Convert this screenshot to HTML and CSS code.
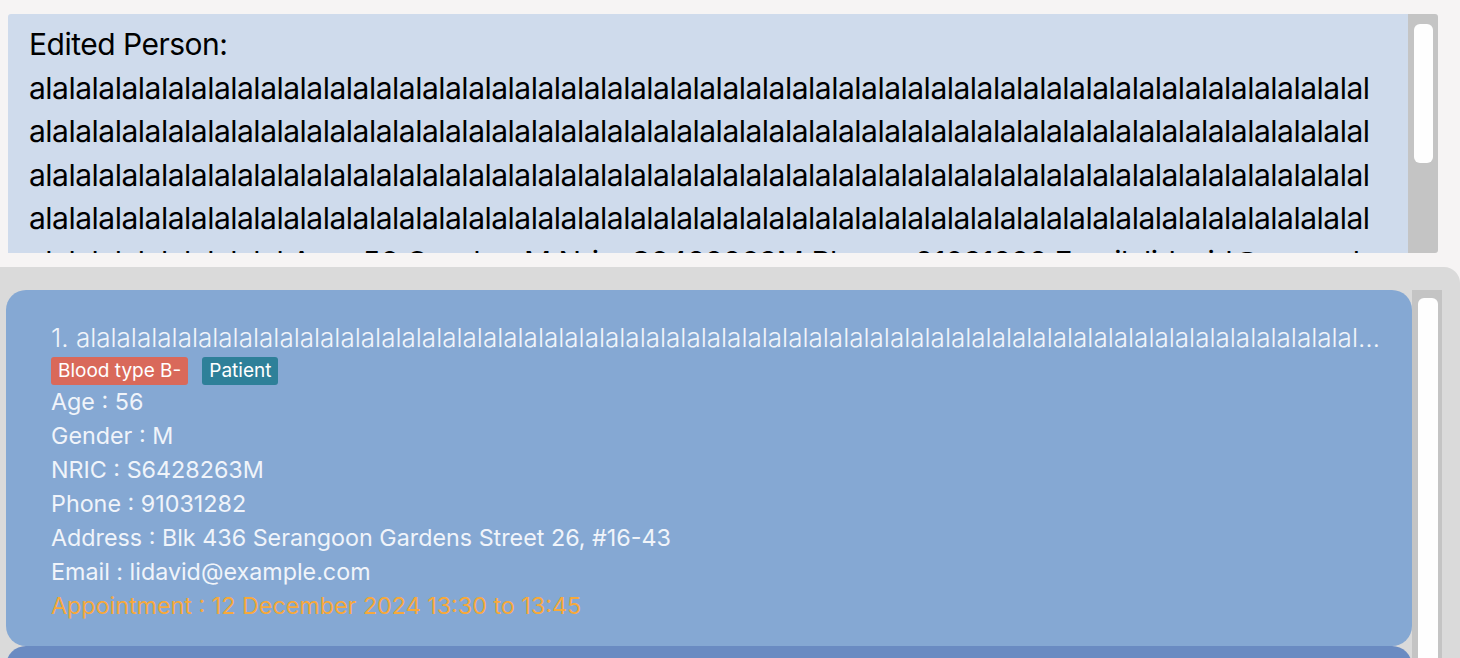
FILE: index.html
```html
<!DOCTYPE html>
<html>
<head>
<meta charset="utf-8">
<link rel="stylesheet" href="styles.css">
</head>
<body>
<div class="result">
  <div class="result-text">Edited Person:<br><span class="long">alalalalalalalalalal<!--2-->alalalalalalalalalal<!--3-->alalalalalalalalalal<!--4-->alalalalalalalalalal<!--5-->alalalalalalalalalal<!--6-->alalalalalalalalalal<!--7-->alalalalalalalalalal<!--8-->alalalalalalalalalal<!--9-->alalalalalalalalalal<!--10-->alalalalalalalalalal<!--11-->alalalalalalalalalal<!--12-->alalalalalalalalalal<!--13-->alalalalalalalalalal<!--14-->alalalalalalalalalal<!--15-->alalalalalalalalalal<!--16-->alalalalalalalalalal<!--17-->alalalalalalalalalal<!--18-->alalalalalalalalalal<!--19-->alalalalalalalalalal<!--20-->alalalalalalalalalal<!--21-->alalalalalalalalalal<!--22-->alalalalalalalalalal<!--23-->alalalalalalalalalal<!--24-->alalalalalalalalalal<!--end-->alalal</span> Age: 56 Gender: M Nric: S6428263M Phone: 91031282 Email: lidavid@example.com Address: Blk 436 Serangoon Gardens Street 26, #16-43 Tags: [Blood type B-][Patient]</div>
  <div class="vscroll"><div class="thumb"></div></div>
</div>
<div class="list">
  <div class="cards">
    <div class="card">
      <div class="title">1. alalalalalalalalalalalalalalalalalalalalalalalalalalalalalalalalalalalalalalalalalalalalalalalalalalalalalalalalalalalalalalalalalalalalalalalalalalalalalalalalalalalalalalalalalalalalalalalalalalalalalalalalalalalalalalalalalalalalalalalalalalalalalalalalalalalalalalalalalalalalalalalal</div>
      <div class="tags"><span class="tag tag-blood">Blood type B-</span><span class="tag tag-role">Patient</span></div>
      <div class="detail">Age : 56</div>
      <div class="detail">Gender : M</div>
      <div class="detail">NRIC : S6428263M</div>
      <div class="detail">Phone : 91031282</div>
      <div class="detail">Address : Blk 436 Serangoon Gardens Street 26, #16-43</div>
      <div class="detail">Email : lidavid@example.com</div>
      <div class="detail appt">Appointment : 12 December 2024 13:30 to 13:45</div>
    </div>
    <div class="card card-alt"></div>
  </div>
  <div class="vscroll list-scroll"><div class="thumb"></div></div>
</div>
</body>
</html>
```
FILE: styles.css
```css
html, body {
  margin: 0;
  padding: 0;
  height: 100%;
  overflow: hidden;
}
body {
  background: #f6f4f4;
  font-family: "Inter", "Noto Sans", sans-serif;
}
.result {
  display: flex;
  margin: 14px 22px 0 8px;
  height: 239px;
}
.result-text {
  flex: 1;
  background: #cfdbec;
  border-top-left-radius: 3px;
  padding: 9px 26px 0 21px;
  font-size: 30px;
  letter-spacing: -0.5px;
  line-height: 43.5px;
  color: #000;
  overflow: hidden;
  word-break: break-all;
}
.vscroll {
  width: 30px;
  background: #c4c4c4;
  border-radius: 0 3px 3px 0;
  padding: 10px 5px 0 6px;
  box-sizing: border-box;
}
.thumb {
  height: 139px;
  background: #fefefe;
  border-radius: 6px;
}
.list {
  margin-top: 14px;
  background: #dadada;
  border-top-right-radius: 16px;
  height: 400px;
  display: flex;
  padding: 23px 18px 0 6px;
  box-sizing: border-box;
}
.cards {
  flex: 1;
  min-width: 0;
}
.card {
  background: #85a8d3;
  border-radius: 20px;
  padding: 30px 30px 23px 45px;
  color: #f0f4fa;
}
.card-alt {
  background: #6a8bc2;
  height: 60px;
  padding: 0;
}
.title {
  font-size: 26px;
  line-height: 36px;
  font-weight: 300;
  white-space: nowrap;
  overflow: hidden;
  text-overflow: ellipsis;
}
.tags {
  display: flex;
  gap: 14px;
  margin-top: 1px;
}
.tag {
  font-size: 19px;
  line-height: 28px;
  padding: 0 7px;
  border-radius: 3px;
  color: #fff;
}
.tag-blood { background: #d9695a; }
.tag-role { background: #2e8099; }
.detail {
  font-size: 23.3px;
  line-height: 34px;
  font-weight: 400;
}
.appt { color: #f7a93b; }
.list-scroll {
  border-radius: 0;
  padding: 8px 4px 0 6px;
}
.list-scroll .thumb {
  height: 400px;
}
```
